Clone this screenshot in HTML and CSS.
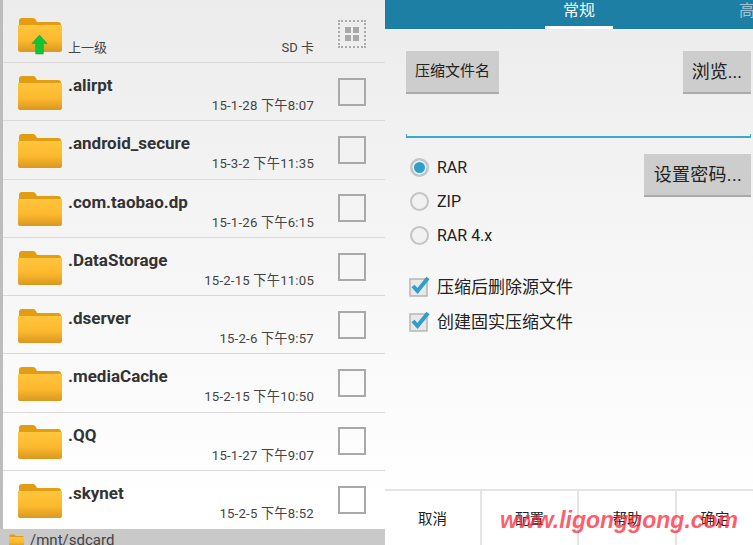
FILE: index.html
```html
<!DOCTYPE html>
<html lang="zh">
<head>
  <meta charset="UTF-8">
  <title>压缩文件</title>
  <link rel="stylesheet" href="styles.css">
</head>
<body>
  <svg class="defs" width="0" height="0">
    <defs>
      <linearGradient id="folder-front" x1="0" y1="0" x2="0" y2="1">
        <stop offset="0" stop-color="#ffc53d"/>
        <stop offset="0.55" stop-color="#fdb92e"/>
        <stop offset="1" stop-color="#d9981f"/>
      </linearGradient>
      <symbol id="folder" viewBox="0 0 44 36">
        <path d="M1 5q0-3 3-3h11q2 0 3 2l1 2h21q3 0 3 3v6H1z" fill="#e29d12"/>
        <path d="M0 9h44v25q0 2-2 2H2q-2 0-2-2z" fill="url(#folder-front)"/>
      </symbol>
    </defs>
  </svg>

  <div class="browser">
    <div class="file-row up-row">
      <div class="folder-wrap">
        <svg class="folder"><use href="#folder"/></svg>
        <svg class="up-arrow" viewBox="0 0 18 22">
          <path d="M9 1L17 10H13V21H5V10H1z" fill="#0cc636" stroke="#2c9e3a" stroke-width="0.7"/>
        </svg>
      </div>
      <span class="up-label">上一级</span>
      <span class="sd-label">SD 卡</span>
      <div class="grid-box">
        <i></i><i></i><i></i><i></i>
      </div>
    </div>

    <div class="file-row">
      <svg class="folder"><use href="#folder"/></svg>
      <div class="file-text"><div class="file-name">.alirpt</div><div class="file-date">15-1-28 下午8:07</div></div>
      <div class="check-box"></div>
    </div>
    <div class="file-row">
      <svg class="folder"><use href="#folder"/></svg>
      <div class="file-text"><div class="file-name">.android_secure</div><div class="file-date">15-3-2 下午11:35</div></div>
      <div class="check-box"></div>
    </div>
    <div class="file-row">
      <svg class="folder"><use href="#folder"/></svg>
      <div class="file-text"><div class="file-name">.com.taobao.dp</div><div class="file-date">15-1-26 下午6:15</div></div>
      <div class="check-box"></div>
    </div>
    <div class="file-row">
      <svg class="folder"><use href="#folder"/></svg>
      <div class="file-text"><div class="file-name">.DataStorage</div><div class="file-date">15-2-15 下午11:05</div></div>
      <div class="check-box"></div>
    </div>
    <div class="file-row">
      <svg class="folder"><use href="#folder"/></svg>
      <div class="file-text"><div class="file-name">.dserver</div><div class="file-date">15-2-6 下午9:57</div></div>
      <div class="check-box"></div>
    </div>
    <div class="file-row">
      <svg class="folder"><use href="#folder"/></svg>
      <div class="file-text"><div class="file-name">.mediaCache</div><div class="file-date">15-2-15 下午10:50</div></div>
      <div class="check-box"></div>
    </div>
    <div class="file-row">
      <svg class="folder"><use href="#folder"/></svg>
      <div class="file-text"><div class="file-name">.QQ</div><div class="file-date">15-1-27 下午9:07</div></div>
      <div class="check-box"></div>
    </div>
    <div class="file-row last-row">
      <svg class="folder"><use href="#folder"/></svg>
      <div class="file-text"><div class="file-name">.skynet</div><div class="file-date">15-2-5 下午8:52</div></div>
      <div class="check-box"></div>
    </div>

    <div class="path-bar">
      <svg class="path-folder"><use href="#folder"/></svg>
      <span>/mnt/sdcard</span>
    </div>
  </div>

  <div class="options">
    <div class="tabs">
      <div class="tab active">常规</div>
      <div class="tab dim">高</div>
    </div>

    <div class="form">
      <div class="name-row">
        <div class="btn btn-small">压缩文件名</div>
        <div class="btn">浏览...</div>
      </div>
      <div class="name-input"></div>

      <div class="format-row">
        <div class="radios">
          <div class="radio-row"><span class="radio on"></span>RAR</div>
          <div class="radio-row"><span class="radio"></span>ZIP</div>
          <div class="radio-row"><span class="radio"></span>RAR 4.x</div>
        </div>
        <div class="btn btn-wide">设置密码...</div>
      </div>

      <div class="checks">
        <div class="check-row">
          <svg class="tick" viewBox="0 0 22 22">
            <rect x="1" y="4" width="17" height="17" fill="#e8e8e8" stroke="#b5b5b5" stroke-width="1.5"/>
            <path d="M4 11l4.5 5L19 3" fill="none" stroke="#2f9fc8" stroke-width="4"/>
          </svg>压缩后删除源文件
        </div>
        <div class="check-row">
          <svg class="tick" viewBox="0 0 22 22">
            <rect x="1" y="4" width="17" height="17" fill="#e8e8e8" stroke="#b5b5b5" stroke-width="1.5"/>
            <path d="M4 11l4.5 5L19 3" fill="none" stroke="#2f9fc8" stroke-width="4"/>
          </svg>创建固实压缩文件
        </div>
      </div>
    </div>

    <div class="actions">
      <div class="action">取消</div>
      <div class="action">配置</div>
      <div class="action">帮助</div>
      <div class="action">确定</div>
    </div>
  </div>

  <div class="watermark">www.ligonggong.com</div>
</body>
</html>
```

FILE: styles.css
```css
* {
  box-sizing: border-box;
  margin: 0;
  padding: 0;
}
body {
  width: 753px;
  height: 545px;
  overflow: hidden;
  display: flex;
  position: relative;
  font-family: Roboto, "Noto Sans CJK SC", sans-serif;
  color: #222;
  background: linear-gradient(#ececec, #fff 92%);
}
.defs {
  position: absolute;
}

/* left panel */
.browser {
  width: 385px;
  height: 545px;
  flex: none;
  display: flex;
  flex-direction: column;
  border-left: 3px solid #bdbdbd;
}
.file-row {
  height: 58.3px;
  flex: none;
  display: flex;
  align-items: center;
  padding-left: 15px;
  border-bottom: 1px solid #d9d9d9;
}
.up-row {
  height: 63px;
  align-items: flex-start;
  position: relative;
}
.last-row {
  border-bottom: none;
}
.folder {
  width: 44px;
  height: 36px;
  flex: none;
  display: block;
}
.folder-wrap {
  position: relative;
  width: 44px;
  height: 36px;
  margin-top: 16px;
}
.up-arrow {
  position: absolute;
  left: 13px;
  top: 18px;
  width: 17px;
  height: 21px;
}
.up-label {
  margin: 37px 0 0 6px;
  font-size: 13px;
  color: #444;
}
.sd-label {
  margin: 37px 0 0 auto;
  font-size: 13px;
  color: #444;
}
.grid-box {
  width: 28px;
  height: 28px;
  margin: 20px 19px 0 24px;
  border: 2px dotted #aaa;
  padding: 5px;
  display: grid;
  grid-template-columns: 1fr 1fr;
  gap: 2px;
}
.grid-box i {
  background: #a8a8a8;
}
.file-text {
  flex: 1;
  margin-left: 6px;
  align-self: stretch;
}
.file-name {
  font-size: 17px;
  font-weight: 700;
  line-height: 20px;
  margin-top: 12px;
  color: #333;
}
.file-date {
  font-size: 13.2px;
  line-height: 16px;
  text-align: right;
  margin-top: 3px;
  color: #444;
  letter-spacing: 0.2px;
}
.check-box {
  width: 28px;
  height: 28px;
  flex: none;
  margin: 0 19px 0 24px;
  border: 2px solid #a9a9a9;
}
.path-bar {
  flex: 1;
  background: #c9c9c9;
  display: flex;
  align-items: flex-start;
  padding: 2px 0 0 9px;
  font-size: 15px;
  line-height: 18px;
  color: #444;
  overflow: hidden;
  margin-left: -3px;
}
.path-folder {
  width: 15px;
  height: 14px;
  margin: 2px 6px 0 0;
  flex: none;
}

/* right panel */
.options {
  flex: 1;
  min-width: 0;
  display: flex;
  flex-direction: column;
  height: 545px;
}
.tabs {
  height: 29px;
  flex: none;
  background: #1c7fa3;
  display: flex;
  padding-left: 160px;
  overflow: hidden;
  color: #f2f8fa;
  font-size: 16px;
}
.tab {
  width: 68px;
  flex: none;
  text-align: center;
  line-height: 22px;
  height: 29px;
}
.tab.active {
  border-bottom: 3px solid #fff;
}
.tab.dim {
  margin-left: 126px;
  text-align: left;
  color: #9cc6d6;
}
.form {
  flex: 1;
  padding: 22px 2px 0 21px;
}
.name-row {
  display: flex;
  justify-content: space-between;
}
.btn {
  height: 43px;
  padding: 0 9px;
  background: #cdcdcd;
  border-bottom: 2px solid #aaa;
  font-size: 18px;
  line-height: 41px;
  color: #222;
}
.btn-small {
  font-size: 15px;
}
.btn-wide {
  padding: 0 9px 0 10px;
  letter-spacing: 0.3px;
}
.name-input {
  margin-top: 37px;
  height: 7px;
  border: 2px solid #3ba9cf;
  border-top: none;
  border-left-width: 1px;
  border-right-width: 1px;
  position: relative;
  clip-path: inset(3px 0 0 0);
}
.format-row {
  display: flex;
  justify-content: space-between;
  align-items: flex-start;
  margin-top: 16px;
}
.radios {
  margin-top: 3px;
  display: flex;
  flex-direction: column;
  gap: 14px;
}
.radio-row {
  display: flex;
  align-items: center;
  height: 20px;
  font-size: 16px;
  color: #222;
}
.radio {
  width: 19px;
  height: 19px;
  margin: 0 8px 0 4px;
  border-radius: 50%;
  border: 2px solid #c4c4c4;
  background: #f1f1f1;
}
.radio.on {
  background: #2f9fc8;
  box-shadow: inset 0 0 0 2px #eee;
}
.checks {
  margin-top: 30px;
  display: flex;
  flex-direction: column;
  gap: 14px;
}
.check-row {
  display: flex;
  align-items: center;
  height: 21px;
  font-size: 17px;
  color: #222;
}
.tick {
  width: 22px;
  height: 22px;
  margin: 0 6px 0 3px;
  flex: none;
}
.actions {
  height: 56px;
  flex: none;
  display: grid;
  grid-template-columns: 97px 97px 98px 1fr;
  border-top: 2px solid #e4e4e4;
}
.action {
  text-align: center;
  font-size: 14.5px;
  line-height: 58px;
  color: #222;
  border-right: 2px solid #e4e4e4;
}
.action:last-child {
  border-right: none;
}

/* watermark over the bottom bar */
.watermark {
  position: absolute;
  left: 500px;
  top: 506px;
  font-family: "Liberation Sans", sans-serif;
  font-size: 23px;
  font-weight: 700;
  font-style: italic;
  line-height: 28px;
  color: rgba(255, 40, 55, 0.75);
  white-space: nowrap;
}
```
